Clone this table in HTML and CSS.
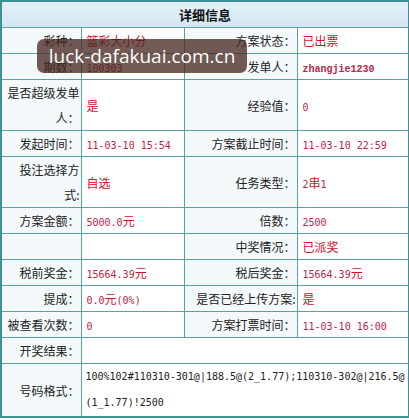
FILE: index.html
```html
<!DOCTYPE html>
<html lang="zh-CN">
<head>
<meta charset="utf-8">
<title>详细信息</title>
<link rel="stylesheet" href="styles.css">
</head>
<body>
<div class="wrap">
<table class="detail">
  <colgroup>
    <col class="c1"><col class="c2"><col class="c3"><col class="c4">
  </colgroup>
  <tr><th class="head" colspan="4">详细信息</th></tr>
  <tr>
    <td class="lbl">彩种：</td><td class="val">篮彩大小分</td>
    <td class="lbl">方案状态：</td><td class="val">已出票</td>
  </tr>
  <tr>
    <td class="lbl">期数：</td><td class="val"><span class="num">100303</span></td>
    <td class="lbl">发单人：</td><td class="val"><span class="user">zhangjie1230</span></td>
  </tr>
  <tr>
    <td class="lbl">是否超级发单人：</td><td class="val">是</td>
    <td class="lbl">经验值：</td><td class="val"><span class="num">0</span></td>
  </tr>
  <tr>
    <td class="lbl">发起时间：</td><td class="val"><span class="num">11-03-10 15:54</span></td>
    <td class="lbl">方案截止时间：</td><td class="val"><span class="num">11-03-10 22:59</span></td>
  </tr>
  <tr>
    <td class="lbl">投注选择方式:</td><td class="val">自选</td>
    <td class="lbl">任务类型：</td><td class="val"><span class="num">2</span>串<span class="num">1</span></td>
  </tr>
  <tr>
    <td class="lbl">方案金额：</td><td class="val"><span class="num">5000.0</span>元</td>
    <td class="lbl">倍数：</td><td class="val"><span class="num">2500</span></td>
  </tr>
  <tr>
    <td class="lbl"></td><td class="val"></td>
    <td class="lbl">中奖情况：</td><td class="val">已派奖</td>
  </tr>
  <tr>
    <td class="lbl">税前奖金：</td><td class="val"><span class="num">15664.39</span>元</td>
    <td class="lbl">税后奖金：</td><td class="val"><span class="num">15664.39</span>元</td>
  </tr>
  <tr>
    <td class="lbl">提成：</td><td class="val"><span class="num">0.0</span>元<span class="num">(0%)</span></td>
    <td class="lbl">是否已经上传方案:</td><td class="val">是</td>
  </tr>
  <tr>
    <td class="lbl">被查看次数：</td><td class="val"><span class="num">0</span></td>
    <td class="lbl">方案打票时间：</td><td class="val"><span class="num">11-03-10 16:00</span></td>
  </tr>
  <tr>
    <td class="lbl">开奖结果：</td><td class="val" colspan="3"></td>
  </tr>
  <tr>
    <td class="lbl">号码格式：</td><td class="val code" colspan="3"><span class="codeline">100%102#110310-301@|188.5@(2_1.77);110310-302@|216.5@</span><br><span class="codeline">(1_1.77)!2500</span></td>
  </tr>
</table>
<div class="watermark">luck-dafakuai.com.cn</div>
</div>
</body>
</html>
```
FILE: styles.css
```css
html, body {
  margin: 0;
  padding: 0;
  background: #ffffff;
}
.wrap {
  position: relative;
  width: 409px;
}
.detail {
  width: 408px;
  table-layout: fixed;
  border-collapse: collapse;
  border: 2px solid #3f8f99;
  font-family: "Noto Sans CJK SC", "Noto Sans", sans-serif;
  font-size: 12px;
  color: #222;
}
.c1 { width: 80px; }
.c2 { width: 103px; }
.c3 { width: 113px; }
.c4 { width: 112px; }
.detail th,
.detail td {
  border: 1px solid #5a9fa9;
  padding: 0;
  line-height: 25px;
  height: 25px;
  vertical-align: middle;
  overflow: hidden;
}
.head {
  background: linear-gradient(#e3f0f8, #d3e7f3);
  font-size: 13px;
  font-weight: bold;
  color: #111;
  text-align: center;
}
.lbl {
  background: #f4f9fc;
  text-align: right;
  padding-right: 1px !important;
  padding-left: 3px !important;
}
.val {
  background: #ffffff;
  color: #d0112f;
  padding-left: 5px !important;
}
.num {
  font-family: "DejaVu Sans Mono", monospace;
  font-size: 10px;
  line-height: 1;
  color: #b8264a;
}
.user {
  font-family: "Liberation Mono", monospace;
  font-size: 10px;
  line-height: 1;
  font-weight: bold;
  color: #b8264a;
}
.code {
  font-family: "DejaVu Sans Mono", monospace;
  font-size: 10px;
  color: #222;
  white-space: nowrap;
  line-height: 26px !important;
  padding-left: 4px !important;
}
.watermark {
  position: absolute;
  left: 37px;
  top: 39px;
  width: 210px;
  height: 34px;
  border-radius: 7px;
  background: rgba(70, 38, 32, 0.76);
  color: #ffffff;
  font-family: "Open Sans", "Noto Sans", sans-serif;
  font-size: 19px;
  line-height: 34px;
  text-align: center;
}
```
